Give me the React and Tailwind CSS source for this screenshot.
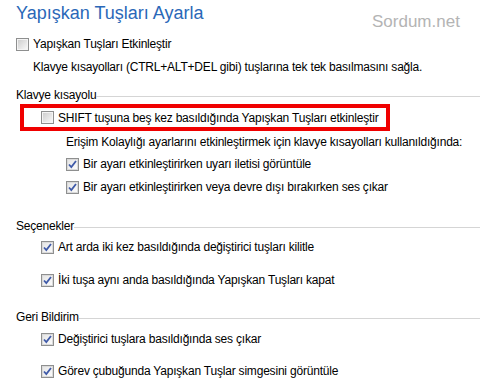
import React from 'react'

const FONT = { fontFamily: '"Liberation Sans", Arial, sans-serif' }

function Box({ checked }) {
  return (
    <span className="relative inline-flex h-[13px] w-[13px] shrink-0 items-center justify-center border border-[#8e8f8f] bg-white">
      {checked ? (
        <span className="flex h-[11px] w-[11px] items-center justify-center border border-[#dadada] bg-gradient-to-br from-[#e6e6e6] to-[#fbfbfb]">
          <svg width="9" height="9" viewBox="0 0 9 9">
            <path d="M1 4.5 L3.3 7 L8 1" fill="none" stroke="#3f5aa8" strokeWidth="1.8" />
          </svg>
        </span>
      ) : (
        <span className="h-[11px] w-[11px] border border-[#f4f4f4] bg-gradient-to-br from-[#cfcfcf] to-[#f7f7f7]" />
      )}
    </span>
  )
}

function Check({ checked, children, className = '' }) {
  return (
    <div className={`flex h-4 items-center gap-[4px] ${className}`}>
      <Box checked={checked} />
      <span className="whitespace-nowrap">{children}</span>
    </div>
  )
}

function Section({ label, className = '' }) {
  return (
    <div className={`flex h-4 items-center ${className}`}>
      <span className="whitespace-nowrap">{label}</span>
      <div className="mt-[2px] h-px flex-1 bg-[#d5d5d5]" />
    </div>
  )
}

export default function App() {
  return (
    <div className="relative h-[390px] w-[480px] overflow-hidden bg-white pl-4 text-[12px] tracking-[-0.2px] text-black" style={FONT}>
      <span className="absolute left-[372px] top-[9px] text-[17px] tracking-normal text-[#b4b4b4]">Sordum.net</span>

      <div className="flex flex-col">
        <h1 className="h-[26px] text-[18px] leading-[26px] tracking-normal text-[#2a68b8]">Yapışkan Tuşları Ayarla</h1>

        <Check className="mt-[10px]">Yapışkan Tuşları Etkinleştir</Check>
        <div className="mt-[7px] flex h-4 items-center pl-[17px] whitespace-nowrap">
          Klavye kısayolları (CTRL+ALT+DEL gibi) tuşlarına tek tek basılmasını sağla.
        </div>

        <Section label="Klavye kısayolu" className="mt-[12px]" />

        <div className="ml-1 mt-px flex h-[27px] w-[370px] items-center border-4 border-[#f00000] pl-[17px]">
          <div className="flex items-center gap-[4px]">
            <Box />
            <span className="whitespace-nowrap">SHIFT tuşuna beş kez basıldığında Yapışkan Tuşları etkinleştir</span>
          </div>
        </div>

        <div className="mt-[3px] flex h-4 items-center pl-[50px] whitespace-nowrap">
          Erişim Kolaylığı ayarlarını etkinleştirmek için klavye kısayolları kullanıldığında:
        </div>
        <Check checked className="mt-[6px] pl-[50px]">Bir ayarı etkinleştirirken uyarı iletisi görüntüle</Check>
        <Check checked className="mt-[7px] pl-[50px]">Bir ayarı etkinleştirirken veya devre dışı bırakırken ses çıkar</Check>

        <Section label="Seçenekler" className="mt-[23px]" />
        <Check checked className="mt-[5px] pl-[25px]">Art arda iki kez basıldığında değiştirici tuşları kilitle</Check>
        <Check checked className="mt-[17px] pl-[25px]">İki tuşa aynı anda basıldığında Yapışkan Tuşları kapat</Check>

        <Section label="Geri Bildirim" className="mt-[21px]" />
        <Check checked className="mt-[6px] pl-[25px]">Değiştirici tuşlara basıldığında ses çıkar</Check>
        <Check checked className="mt-[16px] pl-[25px]">Görev çubuğunda Yapışkan Tuşlar simgesini görüntüle</Check>
      </div>
    </div>
  )
}
